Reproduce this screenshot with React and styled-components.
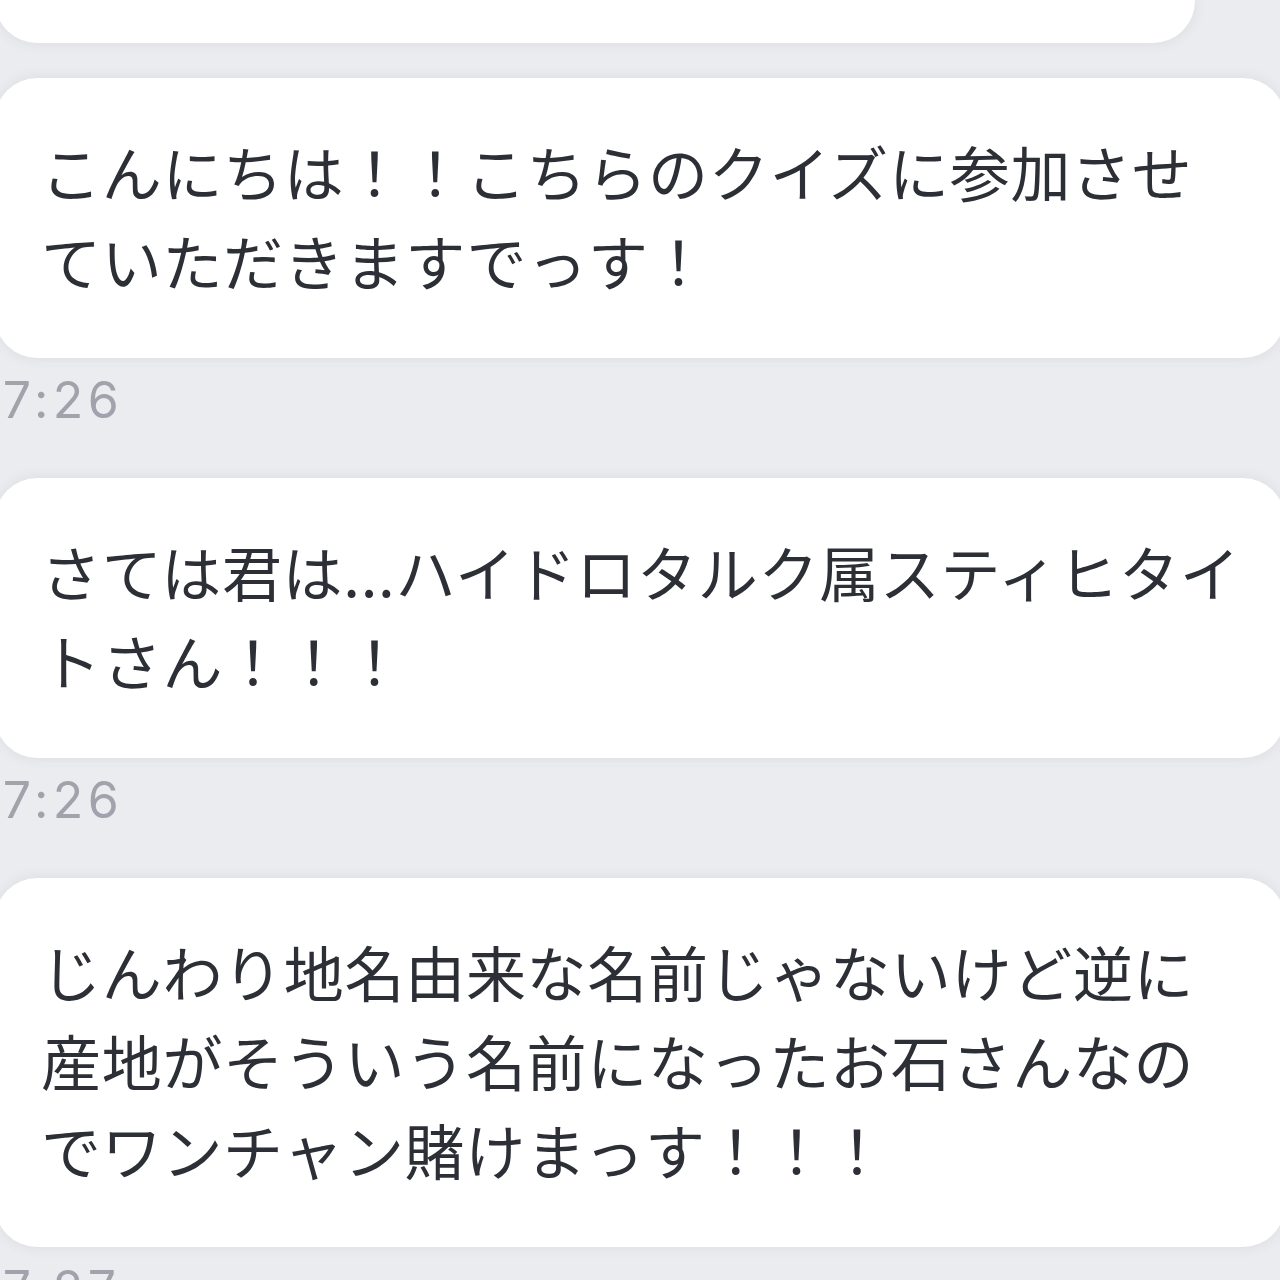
import React from "react";
import styled, { createGlobalStyle } from "styled-components";

const GlobalStyle = createGlobalStyle`
  html, body {
    margin: 0;
    padding: 0;
    background: #ebecf0;
    overflow: hidden;
  }
`;

const Thread = styled.div`
  display: flex;
  flex-direction: column;
  align-items: flex-start;
  width: 1290px;
  margin-left: -5px;
  font-family: "Noto Sans CJK JP", "Noto Sans", sans-serif;
`;

const Bubble = styled.div`
  box-sizing: border-box;
  width: ${props => (props.$clipped ? '1200px' : '1290px')};
  height: ${props => (props.$clipped ? '43px' : 'auto')};
  padding: ${props => (props.$clipped ? '0' : '48px 42px 54px 46px')};
  margin-bottom: ${props => (props.$clipped ? '35px' : '0')};
  background: #fff;
  border-radius: ${props => (props.$clipped ? '0 0 42px 42px' : '42px')};
  box-shadow: 0 0 14px rgba(60, 64, 80, 0.09);
  color: #2c2f35;
  font-size: 60px;
  letter-spacing: 0.7px;
  line-height: 89px;
  white-space: nowrap;
`;

const Time = styled.div`
  margin: 16px 0 52px -17px;
  font-family: Inter, "Liberation Sans", sans-serif;
  font-size: 50px;
  letter-spacing: 4.5px;
  line-height: 52px;
  color: #a0a3ab;
`;

const messages = [
  {
    lines: ["こんにちは！！こちらのクイズに参加させ", "ていただきますでっす！"],
    time: "17:26",
  },
  {
    lines: ["さては君は...ハイドロタルク属スティヒタイ", "トさん！！！"],
    time: "17:26",
  },
  {
    lines: [
      "じんわり地名由来な名前じゃないけど逆に",
      "産地がそういう名前になったお石さんなの",
      "でワンチャン賭けまっす！！！",
    ],
    time: "17:27",
  },
];

const App = () => {
  return (
    <>
      <GlobalStyle />
      <Thread>
        <Bubble $clipped />
        {messages.map((msg, i) => (
          <React.Fragment key={i}>
            <Bubble>
              {msg.lines.map((line, j) => (
                <React.Fragment key={j}>
                  {j > 0 && <br />}
                  {line}
                </React.Fragment>
              ))}
            </Bubble>
            <Time>{msg.time}</Time>
          </React.Fragment>
        ))}
      </Thread>
    </>
  );
};

export default App;
